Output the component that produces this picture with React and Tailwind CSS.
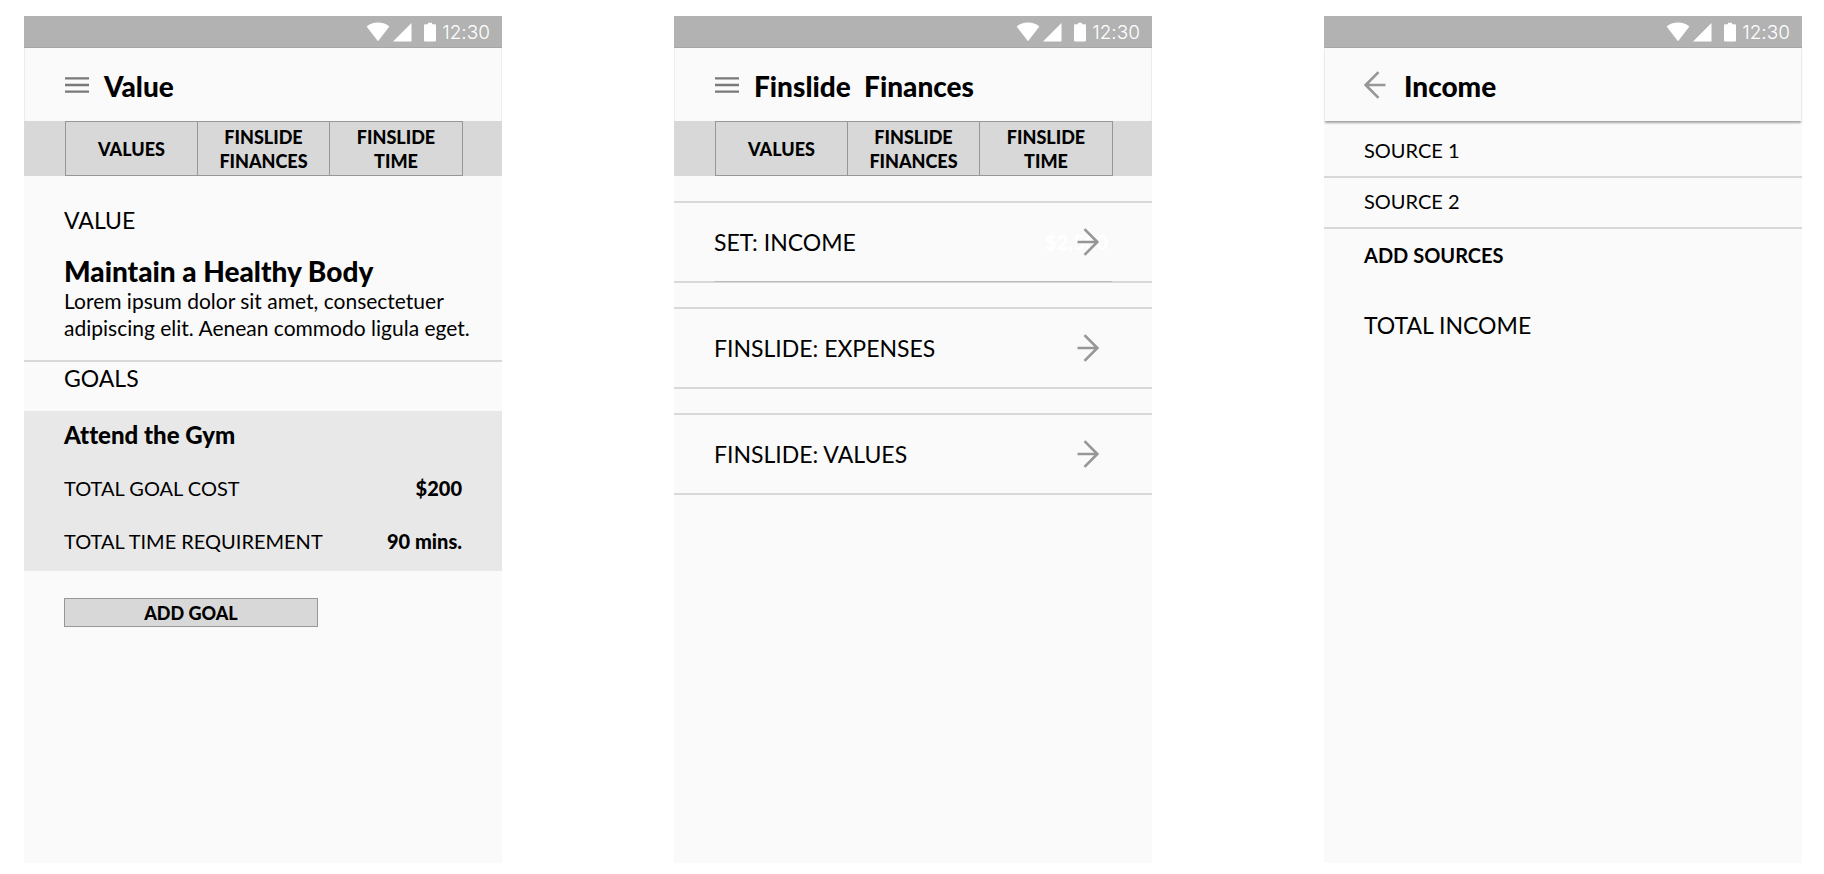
import { clsx } from "clsx";

const tabs = ["Values", "Finslide Finances", "Finslide Time"];

const sections = [
  { label: "Set: Income", amount: "$2,500" },
  { label: "Finslide: Expenses" },
  { label: "Finslide: Values" },
];

const sources = ["Source 1", "Source 2"];

function StatusBar() {
  return (
    <div className="flex h-8 items-center justify-end border-b border-[#a6a6a6] bg-[#b2b2b2] pr-3 text-white">
      <svg width="24" height="20" viewBox="0 0 24 20" fill="currentColor" aria-hidden="true">
        <path d="M12 19.2 0.6 4.6C3.6 2 7.6 0.6 12 0.6s8.4 1.4 11.4 4Z" />
      </svg>
      <svg className="ml-[3px]" width="19" height="20" viewBox="0 0 19 20" fill="currentColor" aria-hidden="true">
        <path d="M18.5 1v18.5H0Z" />
      </svg>
      <svg className="ml-3" width="12" height="20" viewBox="0 0 12 20" fill="currentColor" aria-hidden="true">
        <path d="M4 0.8h4v1.4h3q1 0 1 1v15.3q0 1-1 1H1q-1 0-1-1V3.2q0-1 1-1h3Z" />
      </svg>
      <span className="ml-[6px] pt-[2px] font-[Inter,sans-serif] text-[19px] leading-6 font-light">12:30</span>
    </div>
  );
}

function MenuIcon() {
  return (
    <svg width="24" height="18" viewBox="0 0 24 18" stroke="#7a7a7a" strokeWidth="2.4" aria-hidden="true">
      <path d="M0 2.4h24M0 9h24M0 15.6h24" />
    </svg>
  );
}

function ArrowIcon({ back = false }) {
  return (
    <svg
      className={clsx("relative", back && "rotate-180")}
      width="22"
      height="28"
      viewBox="0 0 22 28"
      fill="none"
      stroke="#979797"
      strokeWidth="2.6"
      aria-hidden="true"
    >
      <path d="M0.5 14H20.5M7.5 1.2 20.3 14 7.5 26.8" />
    </svg>
  );
}

function Screen({ title, back = false, children }) {
  return (
    <section className="flex min-w-0 flex-1 flex-col bg-[#fafafa]">
      <StatusBar />
      <header
        className={clsx(
          "flex h-[73px] items-center border-x border-[#ececec]",
          back ? "px-[39px] shadow-[0_3px_2px_-1px_rgba(0,0,0,0.35)]" : "px-10"
        )}
      >
        <button type="button" aria-label={back ? "Back" : "Menu"}>
          {back ? <ArrowIcon back /> : <MenuIcon />}
        </button>
        <h1 className={clsx("pt-[2px] text-[28px] leading-8 font-black whitespace-pre", back ? "ml-[18px]" : "ml-[15px]")}>
          {title}
        </h1>
      </header>
      {children}
    </section>
  );
}

function Tabs() {
  return (
    <nav className="bg-[#d8d8d8] pr-[39px] pl-[41px]">
      <div className="grid h-[55px] grid-cols-3 divide-x divide-[#979797] border border-[#979797]">
        {tabs.map((tab) => (
          <button key={tab} type="button" className="px-5 pt-[1px] text-[18px] leading-6 font-black uppercase">
            {tab}
          </button>
        ))}
      </div>
    </nav>
  );
}

function ValueScreen() {
  return (
    <Screen title="Value">
      <Tabs />
      <div className="border-b-2 border-[#d8d8d8] px-10 pt-[30px] pb-[19px]">
        <p className="text-[23px] leading-7 uppercase">Value</p>
        <h2 className="mt-[21px] text-[28px] leading-8 font-black">Maintain a Healthy Body</h2>
        <p className="-mr-3 text-[21px] leading-[27px]">
          Lorem ipsum dolor sit amet, consectetuer adipiscing elit. Aenean commodo ligula eget.
        </p>
      </div>
      <h2 className="px-10 pt-[2px] pb-[19px] text-[23px] leading-7 uppercase">Goals</h2>
      <div className="bg-[#e8e8e8] px-10 pt-[10px] pb-4">
        <h3 className="text-[24px] leading-7 font-black">Attend the Gym</h3>
        <dl>
          <div className="mt-[25px] flex justify-between text-[20px] leading-7">
            <dt className="uppercase">Total goal cost</dt>
            <dd className="font-black">$200</dd>
          </div>
          <div className="mt-[25px] flex justify-between text-[20px] leading-7">
            <dt className="uppercase">Total time requirement</dt>
            <dd className="font-black">90 mins.</dd>
          </div>
        </dl>
      </div>
      <div className="px-10 pt-[27px]">
        <button
          type="button"
          className="h-[29px] w-[254px] border border-[#979797] bg-[#d8d8d8] text-[18px] leading-6 font-black uppercase"
        >
          Add goal
        </button>
      </div>
    </Screen>
  );
}

function FinancesScreen() {
  return (
    <Screen title={"Finslide  Finances"}>
      <Tabs />
      <ul className="flex flex-col gap-6 pt-[25px]">
        {sections.map(({ label, amount }) => (
          <li key={label} className="border-y-2 border-[#d8d8d8] px-10">
            <a
              href="#"
              className={clsx(
                "flex items-center justify-between text-[23px] leading-7",
                amount ? "-mb-px h-[79px] border-b border-[#bcbcbc]" : "h-[78px]"
              )}
            >
              <span className="uppercase">{label}</span>
              <span className="relative flex items-center pr-[13px]">
                {amount && (
                  <span className="absolute right-1 text-[20px] leading-7 font-black text-white">{amount}</span>
                )}
                <ArrowIcon />
              </span>
            </a>
          </li>
        ))}
      </ul>
    </Screen>
  );
}

function IncomeScreen() {
  return (
    <Screen title="Income" back>
      <ul className="pt-[6px]">
        {sources.map((source) => (
          <li
            key={source}
            className="border-b-2 border-[#d8d8d8] px-10 pt-[9px] pb-3 text-[20px] leading-7 uppercase"
          >
            {source}
          </li>
        ))}
      </ul>
      <div className="flex flex-col items-start px-10 pt-3">
        <button type="button" className="text-[20px] leading-7 font-bold uppercase">
          Add sources
        </button>
        <p className="mt-[42px] text-[23px] leading-7 uppercase">Total income</p>
      </div>
    </Screen>
  );
}

export default function App() {
  return (
    <main className="flex min-h-screen gap-[172px] bg-white pt-4 pr-[22px] pb-[11px] pl-6 font-[Lato,sans-serif] text-black [font-variant-ligatures:none]">
      <ValueScreen />
      <FinancesScreen />
      <IncomeScreen />
    </main>
  );
}
